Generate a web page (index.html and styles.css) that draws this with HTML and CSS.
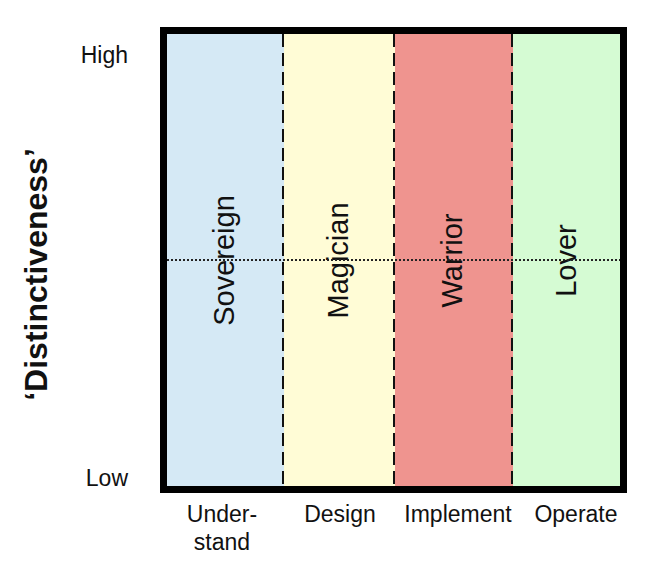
FILE: index.html
```html
<!DOCTYPE html>
<html lang="en">
<head>
<meta charset="utf-8">
<title>Distinctiveness archetypes</title>
<link rel="stylesheet" href="styles.css">
</head>
<body>
<div class="figure">
  <div class="axis-title"><span>‘Distinctiveness’</span></div>
  <div class="ticks"><span>High</span><span>Low</span></div>
  <div class="chart">
    <div class="col col-blue"><span class="role">Sovereign</span></div>
    <div class="divider div-blue"></div>
    <div class="col col-yellow"><span class="role">Magician</span></div>
    <div class="divider div-yellow"></div>
    <div class="col col-red"><span class="role">Warrior</span></div>
    <div class="divider div-red"></div>
    <div class="col col-green"><span class="role">Lover</span></div>
    <div class="midline"></div>
  </div>
  <div class="phases">
    <div class="phase">Under-<br>stand</div>
    <div class="phase">Design</div>
    <div class="phase">Implement</div>
    <div class="phase">Operate</div>
  </div>
</div>
</body>
</html>
```

FILE: styles.css
```css
html, body {
  margin: 0;
  padding: 0;
  background: #ffffff;
}

body {
  font-family: "Liberation Sans", Arial, Helvetica, sans-serif;
  color: #111111;
}

.figure {
  display: grid;
  grid-template-columns: 72px 88px 467px;
  grid-template-rows: 466px auto;
  padding-top: 27px;
}

.axis-title {
  grid-column: 1;
  grid-row: 1;
  display: flex;
  align-items: center;
  justify-content: center;
  padding-top: 28px;
}

.axis-title span {
  font-size: 32px;
  font-weight: bold;
  white-space: nowrap;
  transform: rotate(-90deg);
}

.ticks {
  grid-column: 2;
  grid-row: 1;
  display: flex;
  flex-direction: column;
  justify-content: space-between;
  align-items: flex-end;
  padding: 15px 32px 2px 0;
  font-size: 23px;
  line-height: 26px;
}

.chart {
  grid-column: 3;
  grid-row: 1;
  box-sizing: border-box;
  width: 467px;
  height: 466px;
  border: 7px solid #000000;
  display: flex;
  position: relative;
}

.col {
  display: flex;
  align-items: center;
  justify-content: center;
}

.col-blue { width: 115px; background: #d5e9f5; }
.col-yellow { width: 109px; background: #fffcd6; }
.col-red { width: 116px; background: #ef948f; }
.col-green { width: 107px; background: #d5fbd3; }

.role {
  font-size: 29px;
  white-space: nowrap;
  transform: rotate(-90deg);
}

.divider {
  width: 2px;
  background-image: repeating-linear-gradient(to bottom, #111111 0 13px, transparent 13px 19px);
}

.div-blue { background-color: #d5e9f5; }
.div-yellow { background-color: #fffcd6; }
.div-red { background-color: #ef948f; }

.midline {
  position: absolute;
  left: 0;
  right: 0;
  top: 50%;
  height: 2px;
  margin-top: -1px;
  background-image: repeating-linear-gradient(to right, #222222 0 2.5px, transparent 2.5px 4px);
}

.phases {
  grid-column: 2 / 4;
  grid-row: 2;
  display: grid;
  grid-template-columns: repeat(4, 118px);
  margin-left: 91px;
  padding-top: 7px;
  font-size: 23px;
  line-height: 28px;
}

.phase {
  text-align: center;
}
```
